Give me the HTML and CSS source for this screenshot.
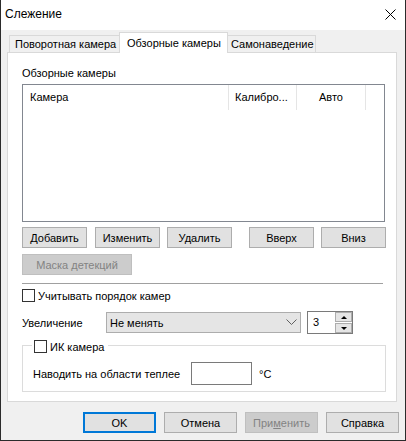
FILE: index.html
```html
<!DOCTYPE html>
<html lang="ru">
<head>
    <meta charset="UTF-8">
    <title>Слежение</title>
    <link rel="stylesheet" href="styles.css">
</head>
<body>
    <div class="window">
        <div class="titlebar">
            <span class="title">Слежение</span>
            <svg class="close" width="11" height="11" viewBox="0 0 11 11">
                <path d="M0.5 0.5 L10.5 10.5 M10.5 0.5 L0.5 10.5" stroke="#000" stroke-width="1" fill="none"/>
            </svg>
        </div>

        <div class="tabs">
            <div class="tab tab-first">Поворотная камера</div>
            <div class="tab tab-active">Обзорные камеры</div>
            <div class="tab tab-last">Самонаведение</div>
        </div>

        <div class="panel">
            <div class="caption">Обзорные камеры</div>

            <div class="listview">
                <div class="lv-header">
                    <div class="col col-camera">Камера</div>
                    <div class="col col-calib">Калибро...</div>
                    <div class="col col-auto">Авто</div>
                    <div class="col col-rest"></div>
                </div>
            </div>

            <div class="btn-row">
                <button class="btn btn-add">Добавить</button>
                <button class="btn btn-edit">Изменить</button>
                <button class="btn btn-del">Удалить</button>
                <button class="btn btn-up">Вверх</button>
                <button class="btn btn-down">Вниз</button>
            </div>
            <div class="btn-row row-mask">
                <button class="btn btn-mask" disabled>Маска детекций</button>
            </div>

            <div class="separator"></div>

            <div class="check-row">
                <span class="check"></span>
                <span class="check-label">Учитывать порядок камер</span>
            </div>

            <div class="zoom-row">
                <span class="zoom-label">Увеличение</span>
                <div class="combo">
                    <span>Не менять</span>
                    <svg width="11" height="7" viewBox="0 0 11 7">
                        <polyline points="0.5,0.5 5.5,5.5 10.5,0.5" stroke="#606060" stroke-width="1" fill="none"/>
                    </svg>
                </div>
                <div class="spin">
                    <span class="spin-value">3</span>
                    <div class="spin-buttons">
                        <div class="spin-btn"><span class="arrow-up"></span></div>
                        <div class="spin-btn"><span class="arrow-down"></span></div>
                    </div>
                </div>
            </div>

            <div class="group">
                <div class="group-title">
                    <span class="check"></span>
                    <span class="check-label">ИК камера</span>
                </div>
                <div class="group-row">
                    <span class="heat-label">Наводить на области теплее</span>
                    <div class="edit"></div>
                    <span class="unit">°C</span>
                </div>
            </div>
        </div>

        <div class="footer">
            <button class="btn btn-ok">OK</button>
            <button class="btn">Отмена</button>
            <button class="btn" disabled>При<u>м</u>енить</button>
            <button class="btn">Справка</button>
        </div>
    </div>
</body>
</html>
```

FILE: styles.css
```css
* {
    box-sizing: border-box;
}

body {
    margin: 0;
    background: #fff;
    font-family: "Liberation Sans", Arial, sans-serif;
    font-size: 11px;
    color: #000;
}

.window {
    width: 406px;
    height: 441px;
    border: 1px solid #2b2b2b;
    border-top: 0;
    background: #f0f0f0;
    display: flex;
    flex-direction: column;
}

.titlebar {
    height: 30px;
    flex: none;
    background: #fff;
    display: flex;
    align-items: center;
    justify-content: space-between;
    padding: 0 9px 2px 4px;
}

.title {
    font-size: 12px;
}

/* tabs */

.tabs {
    height: 22px;
    flex: none;
    display: flex;
    align-items: flex-end;
    padding-left: 8px;
}

.tab {
    height: 17px;
    line-height: 16px;
    border: 1px solid #d9d9d9;
    border-bottom: 0;
    background: #f0f0f0;
    white-space: nowrap;
}

.tab-first {
    width: 111px;
    padding-left: 5px;
}

.tab-active {
    width: 109px;
    height: 21px;
    margin-left: -1px;
    margin-bottom: -1px;
    padding: 2px 0 0 7px;
    background: #fff;
    position: relative;
    z-index: 1;
}

.tab-last {
    width: 89px;
    margin-left: -1px;
    padding-left: 3px;
}

.panel {
    width: 390px;
    height: 350px;
    flex: none;
    margin-left: 6px;
    border: 1px solid #d9d9d9;
    background: #fff;
    padding: 0 10px 0 14px;
    display: flex;
    flex-direction: column;
}

.caption {
    margin-top: 12px;
    height: 16px;
    line-height: 16px;
}

/* list view */

.listview {
    margin-top: 3px;
    width: 363px;
    height: 138px;
    flex: none;
    border: 1px solid #828790;
}

.lv-header {
    height: 25px;
    display: flex;
}

.col {
    height: 25px;
    line-height: 24px;
    border-right: 1px solid #e5e5e5;
    white-space: nowrap;
}

.col-camera {
    width: 206px;
    padding-left: 7px;
}

.col-calib {
    width: 68px;
    padding-left: 6px;
}

.col-auto {
    width: 69px;
    text-align: center;
}

.col-rest {
    width: 18px;
    border-right: 0;
}

/* buttons */

.btn {
    height: 21px;
    border: 1px solid #adadad;
    background: #e1e1e1;
    font: inherit;
    color: #000;
    padding: 0;
}

.btn:disabled {
    background: #cccccc;
    border-color: #bfbfbf;
    color: #838383;
}

.btn-row {
    margin-top: 5px;
    display: flex;
    flex: none;
}

.btn-row .btn {
    width: 65px;
}

.btn-edit {
    margin-left: 8px;
}

.btn-del {
    margin-left: 7px;
}

.btn-up {
    margin-left: 17px;
}

.btn-down {
    margin-left: 7px;
}

.row-mask {
    margin-top: 6px;
}

.btn-row .btn-mask {
    width: 110px;
}

.separator {
    margin-top: 8px;
    width: 361px;
    height: 1px;
    flex: none;
    background: #a0a0a0;
}

/* checkboxes */

.check-row {
    margin-top: 5px;
    display: flex;
    align-items: center;
    height: 13px;
}

.check {
    width: 13px;
    height: 13px;
    flex: none;
    border: 1px solid #333;
    background: #fff;
}

.check-label {
    margin-left: 3px;
    white-space: nowrap;
}

/* zoom row */

.zoom-row {
    margin-top: 9px;
    height: 23px;
    display: flex;
    align-items: center;
}

.zoom-label {
    width: 84px;
}

.combo {
    width: 195px;
    height: 21px;
    border: 1px solid #adadad;
    background: #e5e5e5;
    display: flex;
    align-items: center;
    justify-content: space-between;
    padding: 0 3px 0 3px;
}

.spin {
    margin-left: 6px;
    width: 46px;
    height: 23px;
    border: 1px solid #7a7a7a;
    background: #fff;
    display: flex;
    justify-content: space-between;
}

.spin-value {
    padding-left: 5px;
    line-height: 21px;
}

.spin-buttons {
    width: 17px;
    display: flex;
    flex-direction: column;
}

.spin-btn {
    height: 10px;
    border: 1px solid #adadad;
    background: #e5e5e5;
    display: flex;
    align-items: center;
    justify-content: center;
}

.spin-btn + .spin-btn {
    margin-top: 1px;
}

.arrow-up {
    border-left: 3px solid transparent;
    border-right: 3px solid transparent;
    border-bottom: 3px solid #000;
}

.arrow-down {
    border-left: 3px solid transparent;
    border-right: 3px solid transparent;
    border-top: 3px solid #000;
}

/* ir group */

.group {
    margin-top: 11px;
    width: 364px;
    border: 1px solid #dcdcdc;
    padding-bottom: 6px;
}

.group-title {
    margin-top: -6px;
    margin-left: 9px;
    padding: 0 4px 0 2px;
    height: 13px;
    display: inline-flex;
    align-items: center;
    background: #fff;
    vertical-align: top;
}

.group-row {
    margin-top: 4px;
    height: 23px;
    display: flex;
    align-items: center;
    padding-left: 10px;
}

.heat-label {
    width: 158px;
    white-space: nowrap;
}

.edit {
    width: 61px;
    height: 23px;
    border: 1px solid #7a7a7a;
    background: #fff;
}

.unit {
    margin-left: 7px;
}

/* footer */

.footer {
    display: flex;
    justify-content: flex-end;
    gap: 8px;
    padding: 10px 6px 0 0;
}

.footer .btn {
    width: 73px;
}

.footer .btn-ok {
    border: 2px solid #0078d7;
}
```
